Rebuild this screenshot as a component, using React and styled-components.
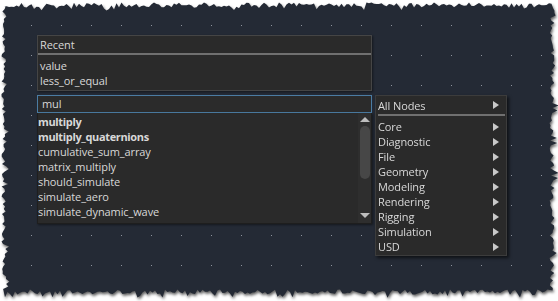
import React from "react";
import styled, { createGlobalStyle } from "styled-components";

// torn paper edge, seeded so it is the same every load
const seed = (() => {
  let s = 91;
  return () => {
    s = (s * 16807) % 2147483647;
    return s / 2147483647;
  };
})();

const tornEdge = (w, h) => {
  const pts = [];
  const jag = (base, amp) => base + (seed() - 0.5) * amp + (seed() > 0.8 ? seed() * amp : 0);
  for (let x = 4; x <= w - 6; x += 2.5) pts.push([x, jag(5, 5)]);
  for (let y = 8; y <= h - 10; y += 2.5) pts.push([jag(w - 6, 5), y]);
  for (let x = w - 8; x >= 4; x -= 2.5) pts.push([x, jag(h - 9, 5)]);
  for (let y = h - 12; y >= 6; y -= 2.5) pts.push([jag(4, 5), y]);
  return `polygon(${pts.map(([x, y]) => `${x.toFixed(1)}px ${y.toFixed(1)}px`).join(", ")})`;
};

const EDGE = tornEdge(558, 301);

const GlobalStyle = createGlobalStyle`
  body {
    margin: 0;
    background: #ffffff;
  }
`;

const Frame = styled.div`
  width: 558px;
  height: 301px;
  filter: drop-shadow(1px 2px 1.5px rgba(0, 0, 0, 0.65));
`;

const Sheet = styled.div`
  box-sizing: border-box;
  width: 558px;
  height: 301px;
  padding: 35px 0 0 37px;
  clip-path: ${EDGE};
  background-color: #242a35;
  background-image: radial-gradient(circle at 0.5px 0.5px, #8d939d 0.7px, transparent 1px);
  background-size: 30px 30px;
  background-position: 1px 25px;
  font-family: "Open Sans", "Liberation Sans", sans-serif;
  font-size: 11px;
  letter-spacing: -0.1px;
  color: #d8d8d8;
  display: flex;
  align-items: flex-start;
  gap: 3px;
`;

const Column = styled.div`
  width: 335px;
  display: flex;
  flex-direction: column;
`;

const RecentPanel = styled.div`
  box-sizing: border-box;
  height: 56px;
  margin-bottom: 4px;
  background: #2a2a2a;
  border: 1px solid #454545;
  padding: 0 0 2px;
  box-shadow: 1px 1px 2px rgba(0, 0, 0, 0.45);
`;

const Title = styled.div`
  height: 17px;
  line-height: 17px;
  padding-left: 2px;
`;

const Rule = styled.div`
  height: 2px;
  background: #707070;
  margin: ${(p) => p.margin || "0"};
`;

const Row = styled.div`
  height: 15px;
  line-height: 15px;
  padding-left: ${(p) => p.indent}px;
  font-weight: ${(p) => (p.bold ? 700 : 400)};
  letter-spacing: ${(p) => (p.bold ? "-0.35px" : "-0.1px")};
  white-space: nowrap;
`;

const RecentList = styled.div`
  padding-top: 3px;
`;

const SearchBox = styled.div`
  box-sizing: border-box;
  height: 18px;
  line-height: 16px;
  padding-left: 4px;
  background: #2b2b2b;
  border: 1px solid #4b7ca3;
`;

const Results = styled.div`
  box-sizing: border-box;
  height: 111px;
  display: flex;
  background: #2a2a2a;
  border: 1px solid #1e1e1e;
  border-top: none;
  box-shadow: 1px 1px 2px rgba(0, 0, 0, 0.45);
`;

const ResultItems = styled.div`
  flex: 1;
  padding-top: 1px;
`;

const ScrollBar = styled.div`
  width: 13px;
  display: flex;
  flex-direction: column;
  align-items: center;
  background: #2e2e2e;
`;

const ArrowButton = styled.div`
  height: 12px;
  margin-bottom: ${(p) => (p.last ? 2 : 0)}px;
  display: flex;
  align-items: center;
  justify-content: center;
`;

const Track = styled.div`
  flex: 1;
  width: 100%;
  padding: 1px 0;
  display: flex;
  justify-content: center;
`;

const Thumb = styled.div`
  width: 10px;
  height: 53px;
  border-radius: 5px;
  background: #474747;
`;

const Menu = styled.div`
  box-sizing: border-box;
  width: 132px;
  height: 161px;
  margin-top: 60px;
  padding: 1px 0 2px;
  background: #2a2a2a;
  border: 1px solid #3c3c3c;
  box-shadow: 2px 2px 3px rgba(0, 0, 0, 0.6);
`;

const MenuItem = styled.div`
  height: ${(p) => (p.tall ? 16 : 15)}px;
  display: flex;
  align-items: center;
  justify-content: space-between;
  padding: 0 7px 0 2px;
`;

const MenuGroup = styled.div`
  padding-top: 3px;
`;

const Triangle = ({ dir }) => {
  const shapes = {
    up: "0,5 5,0 10,5",
    down: "0,0 10,0 5,5",
  };
  if (dir === "right") {
    return (
      <svg width="6" height="8" viewBox="0 0 6 8">
        <polygon points="0,0 6,4 0,8" fill="#c9c9c9" />
      </svg>
    );
  }
  return (
    <svg width="10" height="5" viewBox="0 0 10 5">
      <polygon points={shapes[dir]} fill="#bdbdbd" />
    </svg>
  );
};

const recent = ["value", "less_or_equal"];
const results = [
  { name: "multiply", bold: true },
  { name: "multiply_quaternions", bold: true },
  { name: "cumulative_sum_array" },
  { name: "matrix_multiply" },
  { name: "should_simulate" },
  { name: "simulate_aero" },
  { name: "simulate_dynamic_wave" },
];
const categories = [
  "Core",
  "Diagnostic",
  "File",
  "Geometry",
  "Modeling",
  "Rendering",
  "Rigging",
  "Simulation",
  "USD",
];

const App = () => {
  return (
    <>
      <GlobalStyle />
      <Frame>
        <Sheet>
          <Column>
            <RecentPanel>
              <Title>Recent</Title>
              <Rule />
              <RecentList>
                {recent.map((r) => (
                  <Row key={r} indent={2}>
                    {r}
                  </Row>
                ))}
              </RecentList>
            </RecentPanel>
            <SearchBox>mul</SearchBox>
            <Results>
              <ResultItems>
                {results.map((r) => (
                  <Row key={r.name} bold={r.bold} indent={0}>
                    {r.name}
                  </Row>
                ))}
              </ResultItems>
              <ScrollBar>
                <ArrowButton>
                  <Triangle dir="up" />
                </ArrowButton>
                <Track>
                  <Thumb />
                </Track>
                <ArrowButton last>
                  <Triangle dir="down" />
                </ArrowButton>
              </ScrollBar>
            </Results>
          </Column>
          <Menu>
            <MenuItem tall>
              All Nodes
              <Triangle dir="right" />
            </MenuItem>
            <Rule margin="1px 1px 0 2px" />
            <MenuGroup>
              {categories.map((c) => (
                <MenuItem key={c}>
                  {c}
                  <Triangle dir="right" />
                </MenuItem>
              ))}
            </MenuGroup>
          </Menu>
        </Sheet>
      </Frame>
    </>
  );
};

export default App;
